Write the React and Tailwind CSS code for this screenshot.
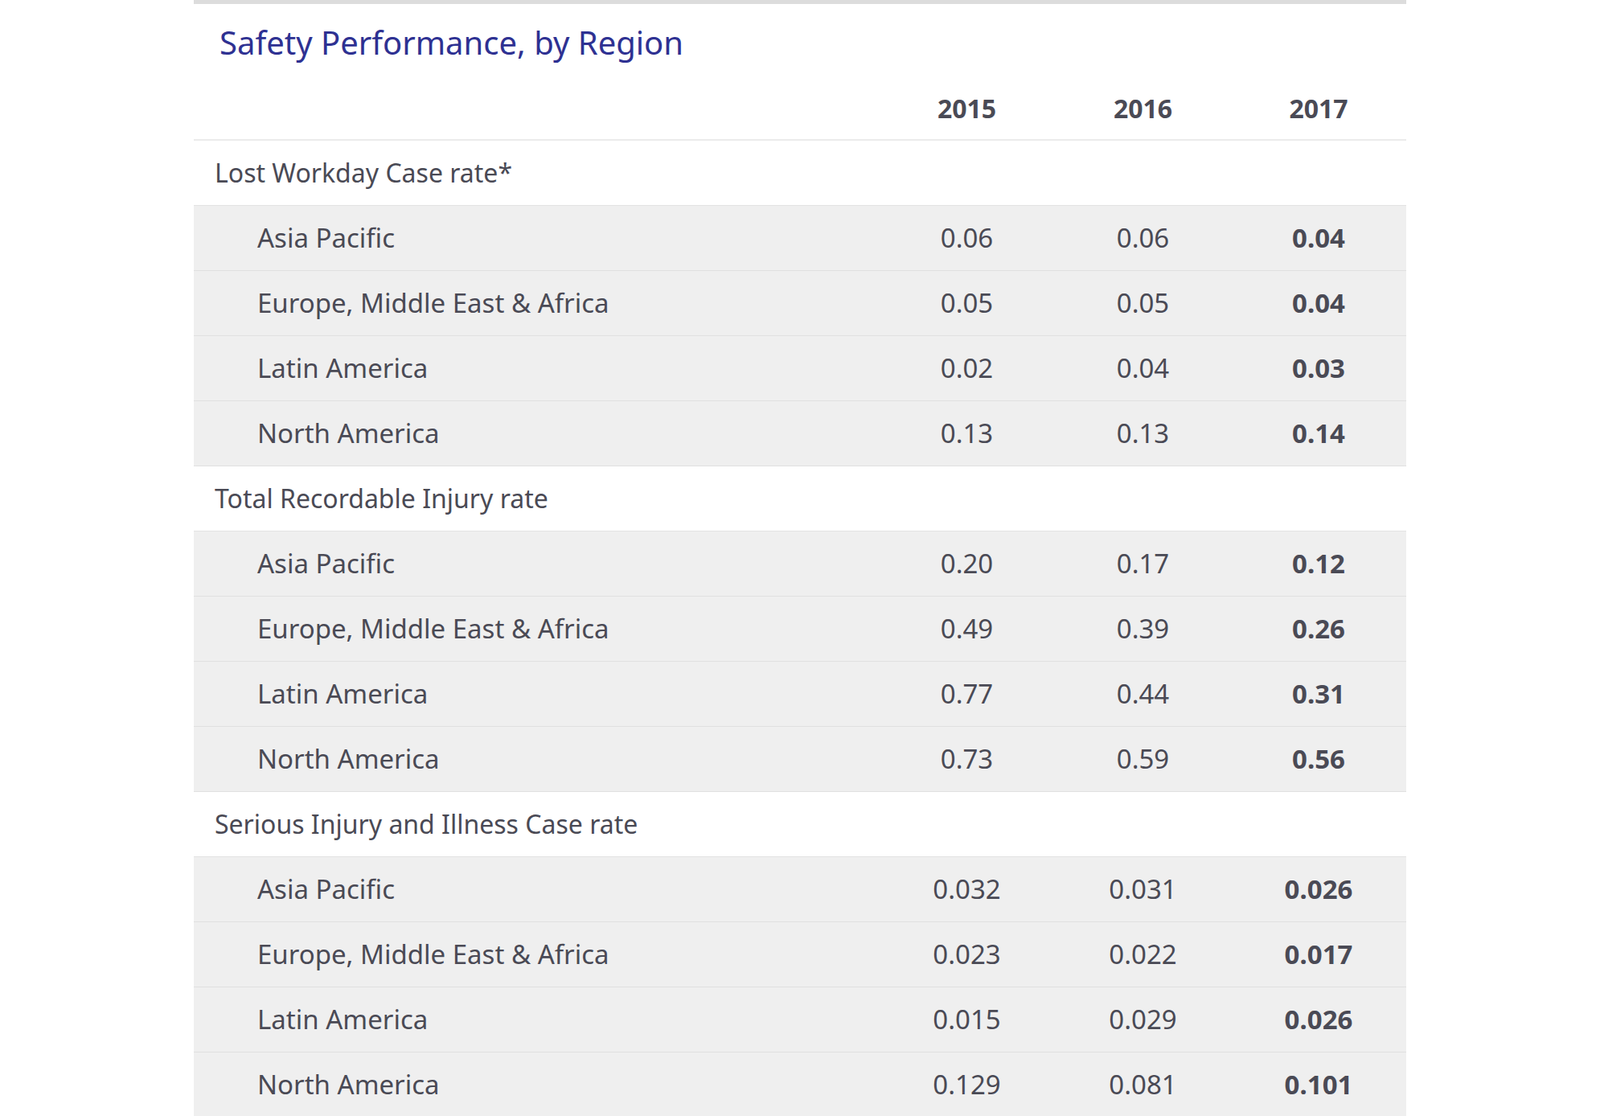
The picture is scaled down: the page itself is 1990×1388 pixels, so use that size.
import React from 'react';

const sections = [
  {
    title: 'Lost Workday Case rate*',
    rows: [
      ['Asia Pacific', '0.06', '0.06', '0.04'],
      ['Europe, Middle East & Africa', '0.05', '0.05', '0.04'],
      ['Latin America', '0.02', '0.04', '0.03'],
      ['North America', '0.13', '0.13', '0.14'],
    ],
  },
  {
    title: 'Total Recordable Injury rate',
    rows: [
      ['Asia Pacific', '0.20', '0.17', '0.12'],
      ['Europe, Middle East & Africa', '0.49', '0.39', '0.26'],
      ['Latin America', '0.77', '0.44', '0.31'],
      ['North America', '0.73', '0.59', '0.56'],
    ],
  },
  {
    title: 'Serious Injury and Illness Case rate',
    rows: [
      ['Asia Pacific', '0.032', '0.031', '0.026'],
      ['Europe, Middle East & Africa', '0.023', '0.022', '0.017'],
      ['Latin America', '0.015', '0.029', '0.026'],
      ['North America', '0.129', '0.081', '0.101'],
    ],
  },
];

const grid = 'grid grid-cols-[1fr_219px_219px_218px] items-center';

export default function App() {
  return (
    <div className="w-[1990px] h-[1388px] bg-white font-['Lato','Noto_Sans',sans-serif] text-[#4a4a55]">
      <div className="ml-[241px] w-[1508px] border-t-[5px] border-[#dcdcdc]">
        <h2 className="pl-[32px] pt-[18px] h-[100px] text-[40px] text-[#2e3192] leading-[60px]">
          Safety Performance, by Region
        </h2>
        <div className={`${grid} h-[70px] pb-[8px] border-b-2 border-[#ebebeb] text-[32px] font-bold`}>
          <div />
          <div className="text-center">2015</div>
          <div className="text-center">2016</div>
          <div className="text-center">2017</div>
        </div>
        {sections.map((s) => (
          <div key={s.title}>
            <div className="h-[81px] flex items-center pl-[26px] text-[32px] border-b border-[#e3e3e3]">
              {s.title}
            </div>
            {s.rows.map((r, i) => (
              <div key={i} className={`${grid} h-[81px] bg-[#efefef] border-b border-[#e0e0e0] text-[33px]`}>
                <div className="pl-[79px]">{r[0]}</div>
                <div className="text-center">{r[1]}</div>
                <div className="text-center">{r[2]}</div>
                <div className="text-center font-bold">{r[3]}</div>
              </div>
            ))}
          </div>
        ))}
      </div>
    </div>
  );
}
